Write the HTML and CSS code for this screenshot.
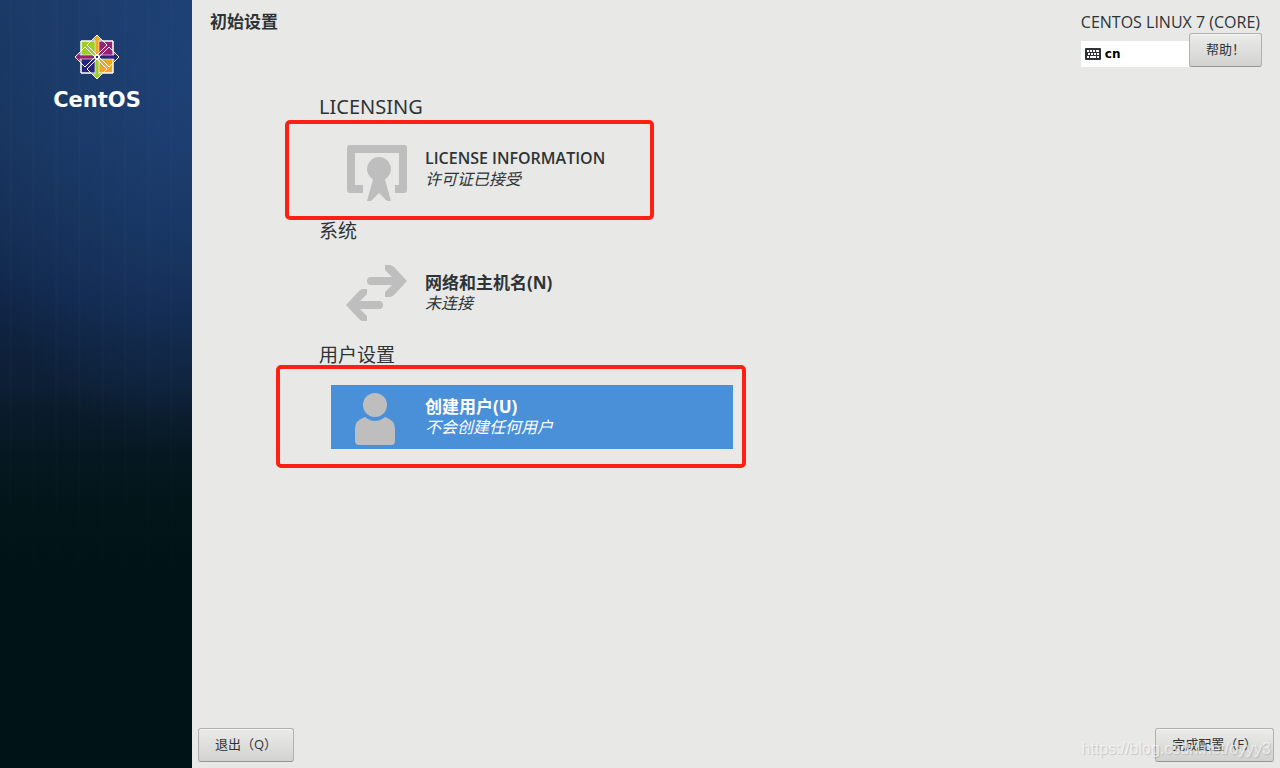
FILE: index.html
```html
<!DOCTYPE html>
<html lang="zh-CN">
<head>
<meta charset="utf-8">
<title>初始设置</title>
<link rel="stylesheet" href="styles.css">
</head>
<body>
<div class="app">
  <aside class="sidebar">
    <svg class="logo" viewBox="0 0 46 46" aria-hidden="true">
      <g stroke="#fff" stroke-width="1">
        <path d="M7 7H23V23H7Z" fill="#9ccd2a"/>
        <path d="M23 7H39V23H23Z" fill="#932279"/>
        <path d="M7 23H23V39H7Z" fill="#262577"/>
        <path d="M23 23H39V39H23Z" fill="#efa724"/>
      </g>
      <g stroke="#fff" stroke-width=".6">
        <path d="M23 1L28 6H25V20L23 22L21 20V6H18Z" fill="#efa724"/>
        <path d="M45 23L40 28V25H26L24 23L26 21H40V18Z" fill="#262577"/>
        <path d="M23 45L18 40H21V26L23 24L25 26V40H28Z" fill="#9ccd2a"/>
        <path d="M1 23L6 18V21H20L22 23L20 25H6V28Z" fill="#932279"/>
      </g>
      <g fill="none" stroke="#fff" stroke-width="1">
        <path d="M23 1L33 11L23 21L13 11Z"/>
        <path d="M45 23L35 33L25 23L35 13Z"/>
        <path d="M23 45L13 35L23 25L33 35Z"/>
        <path d="M1 23L11 13L21 23L11 33Z"/>
        <path d="M23 1L29 7H39V17L45 23L39 29V39H29L23 45L17 39H7V29L1 23L7 17V7H17Z"/>
      </g>
      <path d="M21 21H25V25H21Z" fill="#fff"/>
      <path d="M22 22H24V24H22Z" fill="#262577"/>
    </svg>
    <div class="wordmark">CentOS</div>
  </aside>
  <div class="main">
    <header class="header">
      <h1 class="title">初始设置</h1>
      <div class="product">
        <div class="product-name">CENTOS LINUX 7 (CORE)</div>
        <div class="tools">
          <div class="layout">
            <svg class="keyboard" viewBox="0 0 16 12" aria-hidden="true">
              <rect width="16" height="12" rx="1" fill="#2e3436"/>
              <path d="M2 3H4M5 3H7M8 3H10M11 3H14M3 6H5M6 6H8M9 6H11M12 6H14M2 9H4M5 9H11M12 9H14" stroke="#fff" stroke-width="2"/>
            </svg>
            <span>cn</span>
          </div>
          <button class="button help" type="button">帮助！</button>
        </div>
      </div>
    </header>
    <main class="hub">
      <section class="category">
        <h2 class="category-title latin">LICENSING</h2>
        <button class="spoke" type="button">
          <svg class="icon" viewBox="0 0 64 64" aria-hidden="true">
            <path fill="#bebebe" d="M5 8H59Q62 8 62 11V53Q62 56 59 56H50V48H54V16H10V48H18V56H5Q2 56 2 53V11Q2 8 5 8Z"/>
            <path fill="#bebebe" d="M34 20A12 12 0 0 1 40 42.400L46 64H42L34 56L26 64H22L28 42.400A12 12 0 0 1 34 20Z"/>
          </svg>
          <span class="labels"><strong class="name">LICENSE INFORMATION</strong><em class="status">许可证已接受</em></span>
          <span class="mark mark-license"></span>
        </button>
      </section>
      <section class="category">
        <h2 class="category-title">系统</h2>
        <button class="spoke" type="button">
          <svg class="icon" viewBox="0 0 64 64" aria-hidden="true">
            <path fill="#bebebe" d="M26 16H47L40 9V4H44Q47 4 49 6L62 20L49 34Q47 36 44 36H40V31L47 24H26A4 4 0 0 1 26 16Z"/>
            <path fill="#bebebe" d="M34 40H15L22 33V28H18Q16 28 14 30L1 44L14 58Q16 60 18 60H22V55L15 48H34A4 4 0 0 0 34 40Z"/>
          </svg>
          <span class="labels"><strong class="name name-cjk">网络和主机名(N)</strong><em class="status">未连接</em></span>
        </button>
      </section>
      <section class="category">
        <h2 class="category-title">用户设置</h2>
        <button class="spoke selected" type="button">
          <svg class="icon" viewBox="0 0 64 64" aria-hidden="true">
            <circle cx="30" cy="20" r="12" fill="#bebebe"/>
            <path fill="#bebebe" d="M20 32Q30 40 40 32Q50 35 50 44V56Q50 60 46 60H14Q10 60 10 56V44Q10 35 20 32Z"/>
          </svg>
          <span class="labels"><strong class="name name-cjk">创建用户(U)</strong><em class="status">不会创建任何用户</em></span>
          <span class="mark mark-user"></span>
        </button>
      </section>
    </main>
    <footer class="footer">
      <button class="button" type="button">退出（Q）</button>
      <button class="button" type="button">完成配置（F）</button>
      <span class="watermark">https://blog.csdn.net/oyyy3</span>
    </footer>
  </div>
</div>
</body>
</html>
```

FILE: styles.css
```css
* { box-sizing: border-box; }

body {
  margin: 0;
  background: #e8e8e6;
  color: #2e3436;
  font-family: "Open Sans", "Noto Sans CJK SC", sans-serif;
}

.app { display: flex; min-height: 100vh; }

.sidebar {
  flex: 0 0 15%;
  display: flex;
  flex-direction: column;
  align-items: center;
  padding: 34px 0 0 2px;
  background:
    linear-gradient(transparent 50%, #001417 78%),
    repeating-linear-gradient(90deg, transparent 0 9px, rgba(90, 140, 180, 0.03) 10px 11px, transparent 12px 23px),
    radial-gradient(ellipse 240px 400px at 100% 8%, rgba(32, 70, 128, 0.7), transparent),
    linear-gradient(#1a3862 0, #18345c 17%, #142d52 30%, #11274a 38%, #0e213b 46%, #0a1c2c 55%, #04171c 67%, #001417 78%);
}

.logo { width: 46px; height: 46px; }

.wordmark {
  margin-top: 6px;
  color: #fff;
  font: bold 21px/28px "DejaVu Sans", sans-serif;
}

.main { flex: 1; display: flex; flex-direction: column; }

.header {
  display: flex;
  justify-content: space-between;
  align-items: flex-start;
  padding: 12px 18px 0;
}

.title { margin: 0; font-size: 17px; line-height: 20px; }
.product-name { font-family: "Open Sans", sans-serif; font-size: 16px; line-height: 21px; padding-right: 2px; }
.tools { display: flex; align-items: flex-end; }

.layout {
  flex: 1;
  display: flex;
  align-items: center;
  gap: 4px;
  height: 26px;
  padding-left: 4px;
  background: #fff;
  color: #000;
  font: bold 12px/16px "DejaVu Sans", sans-serif;
}

.keyboard { width: 16px; height: 12px; }

.button {
  height: 34px;
  padding: 0 16px 2px;
  border: 1px solid #b0b0ae;
  border-bottom-color: #969694;
  border-radius: 3px;
  background: linear-gradient(#ebebea, #d2d2d0);
  box-shadow: inset 0 1px #f4f4f3;
  color: #2e3436;
  font: 13px/18px "Open Sans", "Noto Sans CJK SC", sans-serif;
}

.hub { flex: 1; width: 44%; min-width: 414px; margin-left: 127px; padding-top: 27px; }
.category { padding-bottom: 17px; }

.category-title {
  margin: 0 0 17px;
  font: 400 19px/26px "Noto Sans", "Noto Sans CJK SC", sans-serif;
}

.latin { font-size: 20px; }

.spoke {
  position: relative;
  display: flex;
  align-items: center;
  width: 402px;
  height: 64px;
  margin-left: 12px;
  padding: 0 14px;
  border: 0;
  background: none;
  color: inherit;
  font: inherit;
  text-align: left;
}

.selected { background: #4a90d9; color: #fff; }
.icon { width: 64px; height: 64px; flex: none; }
.labels { display: flex; flex-direction: column; margin-left: 16px; }
.name { font-size: 16px; line-height: 21px; font-weight: 600; }
.name-cjk { font-size: 17px; font-weight: 700; }
.status { font-size: 16px; line-height: 21px; }

.mark {
  position: absolute;
  border: 4px solid #ff2013;
  border-radius: 5px;
  pointer-events: none;
}

.mark-license { inset: -17px 79px -19px -46px; }
.mark-user { inset: -20px -13px -19px -55px; }

.footer {
  position: relative;
  display: flex;
  justify-content: space-between;
  padding: 6px;
}

.watermark {
  position: absolute;
  right: 9px;
  bottom: 9px;
  color: rgba(255, 255, 255, 0.6);
  font: 16px/20px "Liberation Sans", sans-serif;
  text-shadow: 1px 1px 1px rgba(100, 100, 100, 0.25);
  pointer-events: none;
}
```
